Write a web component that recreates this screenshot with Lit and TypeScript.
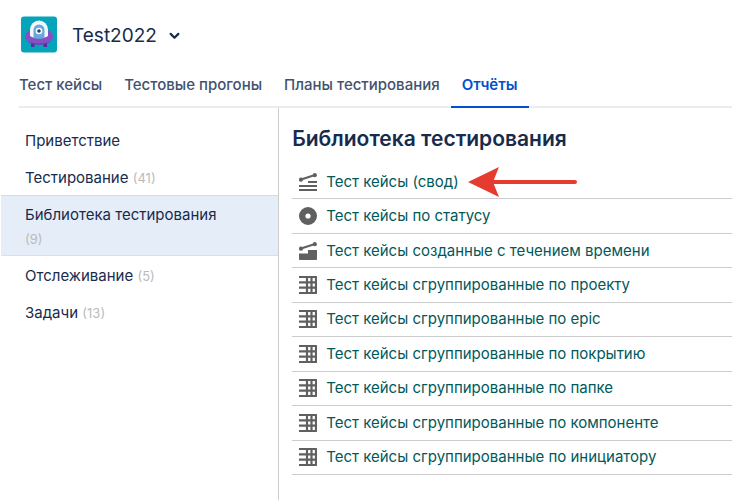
import { LitElement, html, css, svg } from "lit";
import { customElement, property, state } from "lit/decorators.js";
import { classMap } from "lit/directives/class-map.js";

type IconName = "summary" | "status" | "trend" | "grid";

const icons = {
  summary: svg`
    <path d="M2 6.500 16 2" stroke="currentColor" stroke-width="2" />
    <circle cx="2" cy="6.700" r="2.100" /><circle cx="15.800" cy="2.200" r="2.100" />
    <path d="M9 8h9v2H9zM0 12h18v2H0zM0 16h18v2H0z" />`,
  status: svg`<path fill-rule="evenodd" d="M9 0a9 9 0 1 1 0 18A9 9 0 0 1 9 0Zm0 6.400a2.600 2.600 0 1 0 0 5.200 2.600 2.600 0 0 0 0-5.200Z" />`,
  trend: svg`
    <path d="M2 6.500 16 2" stroke="currentColor" stroke-width="2" />
    <circle cx="2" cy="6.700" r="2.100" /><circle cx="15.800" cy="2.200" r="2.100" />
    <path d="M9 8h9v9a1 1 0 0 1-1 1H1a1 1 0 0 1-1-1v-5.500h9z" />`,
  grid: svg`
    <path fill="none" stroke="currentColor" stroke-width="2.200" stroke-linejoin="round"
      d="M0 1h17v16H0M0 6.300h17M0 11.700h17M8 1v16M12.500 1v16" />`,
};

const tabs = ["Тест кейсы", "Тестовые прогоны", "Планы тестирования", "Отчёты"];

const sections: { label: string; count?: number }[] = [
  { label: "Приветствие" },
  { label: "Тестирование", count: 41 },
  { label: "Библиотека тестирования", count: 9 },
  { label: "Отслеживание", count: 5 },
  { label: "Задачи", count: 13 },
];

const reports: { label: string; icon: IconName; marked?: boolean }[] = [
  { label: "Тест кейсы (свод)", icon: "summary", marked: true },
  { label: "Тест кейсы по статусу", icon: "status" },
  { label: "Тест кейсы созданные с течением времени", icon: "trend" },
  { label: "Тест кейсы сгруппированные по проекту", icon: "grid" },
  { label: "Тест кейсы сгруппированные по epic", icon: "grid" },
  { label: "Тест кейсы сгруппированные по покрытию", icon: "grid" },
  { label: "Тест кейсы сгруппированные по папке", icon: "grid" },
  { label: "Тест кейсы сгруппированные по компоненте", icon: "grid" },
  { label: "Тест кейсы сгруппированные по инициатору", icon: "grid" },
];

@customElement("report-icon")
export class ReportIcon extends LitElement {
  @property() name: IconName = "grid";

  static styles = css`
    :host { display: block; width: 18px; height: 18px; color: #606060; }
    .icon { display: block; width: 100%; height: 100%; fill: currentColor; }
  `;

  render() {
    return html`<svg class="icon" viewBox="0 0 18 18" aria-hidden="true">${icons[this.name]}</svg>`;
  }
}

@customElement("project-header")
export class ProjectHeader extends LitElement {
  static styles = css`
    :host { display: flex; align-items: center; gap: 15px; padding: 16px 20px 0; }
    .avatar { display: block; width: 37px; height: 37px; flex: none; }
    .project {
      display: flex; align-items: center; gap: 12px; padding: 2px 0 0; border: 0;
      background: none; color: #172b4d; font: 400 19px/24px Inter, sans-serif; cursor: pointer;
    }
    .chevron { width: 11px; height: 11px; }
  `;

  render() {
    return html`
      <svg class="avatar" viewBox="0 0 37 37" aria-hidden="true">
        <rect x="1" y="0.500" width="36" height="36" rx="3" fill="#06a4bb" />
        <path d="M11 25.500h3.500v5.500H11zM23.500 25.500h3.500v5.500h-3.500z" fill="#52309c" />
        <ellipse cx="19" cy="20.500" rx="14" ry="8.300" fill="#8450c4" />
        <path d="M7 25c6 3.500 18 3.500 24 0-5 5-19 5-24 0Z" fill="#6439a8" />
        <path d="M10 20v-6.500a9 9 0 0 1 18 0V20c-4 3-14 3-18 0Z" fill="#f3f6fb" />
        <path d="M13.500 22V14a5.500 5.500 0 0 1 11 0v8c-3 1-8 1-11 0Z" fill="#67a9df" />
        <circle cx="19" cy="15" r="3.300" fill="#fff" />
        <circle cx="19" cy="15" r="1.800" fill="#283e70" />
      </svg>
      <button class="project" type="button">
        Test2022
        <svg class="chevron" viewBox="0 0 10 10" aria-hidden="true">
          <path d="M1.500 3.500 5 7l3.500-3.500" fill="none" stroke="currentColor" stroke-width="2"
            stroke-linecap="round" stroke-linejoin="round" />
        </svg>
      </button>
    `;
  }
}

@customElement("app-root")
export class AppRoot extends LitElement {
  @state() private tab = "Отчёты";
  @state() private section = "Библиотека тестирования";

  static styles = css`
    :host {
      display: flex; flex-direction: column; min-height: 100vh;
      background: #fff; color: #172b4d; font: 400 15px/24px Inter, sans-serif;
    }
    a { color: inherit; text-decoration: none; }
    ul { list-style: none; margin: 0; padding: 0; }
    .tabs { display: flex; margin-left: 19px; margin-top: 20px; box-shadow: inset 0 -2px #ebecf0; }
    .tab { padding: 0 11px 9px; color: #42526e; font-weight: 500; border-bottom: 2px solid transparent; }
    .tab:first-child { padding-left: 0; }
    .tab.active { color: #0052cc; font-weight: 600; border-color: #0052cc; }
    .body { display: flex; flex: 1; }
    .sidebar { flex: 0 0 38%; padding: 13px 0 0 1px; box-sizing: border-box; box-shadow: 1px 0 #ccc; }
    .section { display: block; padding: 8px 40px 5px 24px; }
    .section.active { background: #e5edf8; box-shadow: inset 0 1px #cfdcee, inset 0 -1px #d5e0f1; }
    .count { color: #bbb; font-size: 13px; }
    .content { flex: 1; min-width: 0; padding: 16px 0 24px 14px; }
    .title { margin: 0 0 11px; font-size: 21px; line-height: 30px; font-weight: 600; }
    .reports { display: grid; grid-auto-rows: 1fr; min-height: 310px; }
    .row { display: flex; align-items: center; gap: 8px; border-bottom: 1px solid #ccc; }
    .report { display: flex; align-items: center; gap: 9px; margin-left: 7px; color: #00595a; }
    .arrow { width: 110px; height: 32px; flex: none; }
  `;

  private pick(event: Event, key: "tab" | "section", value: string) {
    event.preventDefault();
    this[key] = value;
  }

  render() {
    return html`
      <project-header></project-header>
      <nav class="tabs">
        ${tabs.map(
          (t) => html`<a href="#" class=${classMap({ tab: true, active: t === this.tab })}
            @click=${(e: Event) => this.pick(e, "tab", t)}>${t}</a>`
        )}
      </nav>
      <div class="body">
        <nav class="sidebar">
          <ul>
            ${sections.map(
              (s) => html`<li><a href="#" class=${classMap({ section: true, active: s.label === this.section })}
                @click=${(e: Event) => this.pick(e, "section", s.label)}
                >${s.label}${s.count ? html` <span class="count">(${s.count})</span>` : ""}</a></li>`
            )}
          </ul>
        </nav>
        <main class="content">
          <h1 class="title">${this.section}</h1>
          <ul class="reports">
            ${reports.map(
              (r) => html`<li class="row">
                <a href="#" class="report"><report-icon name=${r.icon}></report-icon>${r.label}</a>
                ${r.marked
                  ? html`<svg class="arrow" viewBox="0 0 110 32" aria-hidden="true">
                      <path d="M1 16 32 1l-6 15 6 15Z" fill="#e63c2f" />
                      <path d="M24 16h84" stroke="#e63c2f" stroke-width="4" stroke-linecap="round" />
                    </svg>`
                  : ""}
              </li>`
            )}
          </ul>
        </main>
      </div>
    `;
  }
}
